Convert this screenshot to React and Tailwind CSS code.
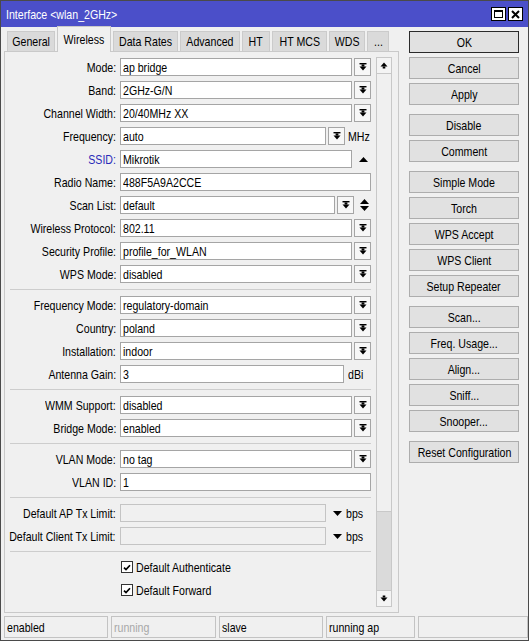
const TABS = [
  { label: "General", w: "w-[48px]" },
  { label: "Wireless", w: "w-[54px]", active: true },
  { label: "Data Rates", w: "w-[65px]" },
  { label: "Advanced", w: "w-[60px]" },
  { label: "HT", w: "w-[28px]" },
  { label: "HT MCS", w: "w-[55px]" },
  { label: "WDS", w: "w-[36px]" },
  { label: "...", w: "w-[22px]" },
];

const SECTIONS = [
  [
    { label: "Mode", value: "ap bridge", kind: "select" },
    { label: "Band", value: "2GHz-G/N", kind: "select" },
    { label: "Channel Width", value: "20/40MHz XX", kind: "select" },
    { label: "Frequency", value: "auto", kind: "freq" },
    { label: "SSID", value: "Mikrotik", kind: "ssid", blue: true },
    { label: "Radio Name", value: "488F5A9A2CCE", kind: "text" },
    { label: "Scan List", value: "default", kind: "scan" },
    { label: "Wireless Protocol", value: "802.11", kind: "select" },
    { label: "Security Profile", value: "profile_for_WLAN", kind: "select" },
    { label: "WPS Mode", value: "disabled", kind: "select" },
  ],
  [
    { label: "Frequency Mode", value: "regulatory-domain", kind: "select" },
    { label: "Country", value: "poland", kind: "select" },
    { label: "Installation", value: "indoor", kind: "select" },
    { label: "Antenna Gain", value: "3", kind: "dbi" },
  ],
  [
    { label: "WMM Support", value: "disabled", kind: "select" },
    { label: "Bridge Mode", value: "enabled", kind: "select" },
  ],
  [
    { label: "VLAN Mode", value: "no tag", kind: "select" },
    { label: "VLAN ID", value: "1", kind: "text" },
  ],
  [
    { label: "Default AP Tx Limit", value: "", kind: "bps" },
    { label: "Default Client Tx Limit", value: "", kind: "bps" },
  ],
];

const BUTTON_GROUPS = [
  ["OK", "Cancel", "Apply"],
  ["Disable", "Comment"],
  ["Simple Mode", "Torch", "WPS Accept", "WPS Client", "Setup Repeater"],
  ["Scan...", "Freq. Usage...", "Align...", "Sniff...", "Snooper..."],
  ["Reset Configuration"],
];

const STATUS = [
  { text: "enabled", w: "w-[104px]" },
  { text: "running", w: "w-[105px]", dim: true },
  { text: "slave", w: "w-[104px]" },
  { text: "running ap", w: "w-[89px]" },
  { text: "", w: "w-[110px]" },
];

// Winbox text is a narrow face; Liberation Sans squeezed to match its widths
const T = ({ children, origin = "origin-left" }) => (
  <span className={`inline-block shrink-0 whitespace-nowrap scale-x-[0.815] ${origin}`}>
    {children}
  </span>
);

const DropIcon = () => (
  <svg width="8" height="8" viewBox="0 0 8 8" fill="#000">
    <rect x="0.5" y="0" width="7" height="1.4" />
    <rect x="2.6" y="1.4" width="2.8" height="2.2" />
    <polygon points="0.5,3.6 7.5,3.6 4,7.6" />
  </svg>
);

const TriUp = () => (
  <svg width="9" height="5" viewBox="0 0 9 5" fill="#000">
    <polygon points="0,5 9,5 4.5,0" />
  </svg>
);

const TriDown = () => (
  <svg width="9" height="5" viewBox="0 0 9 5" fill="#000">
    <polygon points="0,0 9,0 4.5,5" />
  </svg>
);

const ArrowUp = () => (
  <svg width="8" height="7" viewBox="0 0 8 7" fill="#000">
    <polygon points="0.5,4.5 7.5,4.5 4,0.5" />
    <rect x="2.7" y="4.5" width="2.6" height="2" />
  </svg>
);

const ArrowDown = () => (
  <svg width="8" height="7" viewBox="0 0 8 7" fill="#000">
    <rect x="2.7" y="0.5" width="2.6" height="2" />
    <polygon points="0.5,2.5 7.5,2.5 4,6.5" />
  </svg>
);

const Field = ({ value, w, disabled }) => (
  <div
    className={`${w} shrink-0 h-[18px] flex items-center pl-[2px] border ${
      disabled ? "bg-[#f0f0f0] border-[#c4c4c4]" : "bg-white border-[#a5a5a5]"
    } overflow-hidden`}
  >
    {value && <T>{value}</T>}
  </div>
);

const DropButton = () => (
  <div className="w-[17px] h-[18px] shrink-0 ml-[2px] flex items-center justify-center border border-[#a5a5a5] bg-[#f7f7f7]">
    <DropIcon />
  </div>
);

const Unit = ({ text, className }) => (
  <span className={`w-[22px] shrink-0 flex ${className}`}>
    <T>{text}</T>
  </span>
);

const Row = ({ row }) => {
  let control;
  if (row.kind === "select") {
    control = (
      <>
        <Field value={row.value} w="w-[232px]" />
        <DropButton />
      </>
    );
  } else if (row.kind === "text") {
    control = <Field value={row.value} w="w-[251px]" />;
  } else if (row.kind === "freq") {
    control = (
      <>
        <Field value={row.value} w="w-[206px]" />
        <DropButton />
        <Unit text="MHz" className="ml-[3px]" />
      </>
    );
  } else if (row.kind === "ssid") {
    control = (
      <>
        <Field value={row.value} w="w-[232px]" />
        <span className="ml-[7px] flex">
          <TriUp />
        </span>
      </>
    );
  } else if (row.kind === "scan") {
    control = (
      <>
        <Field value={row.value} w="w-[215px]" />
        <DropButton />
        <span className="ml-[6px] flex flex-col gap-[2px]">
          <TriUp />
          <TriDown />
        </span>
      </>
    );
  } else if (row.kind === "dbi") {
    control = (
      <>
        <Field value={row.value} w="w-[224px]" />
        <Unit text="dBi" className="ml-[4px]" />
      </>
    );
  } else if (row.kind === "bps") {
    control = (
      <>
        <Field value="" w="w-[206px]" disabled />
        <span className="ml-[7px] flex">
          <TriDown />
        </span>
        <Unit text="bps" className="ml-[4px]" />
      </>
    );
  }

  return (
    <div className="h-[18px] flex items-center">
      <div
        className={`w-[111px] shrink-0 flex justify-end ${
          row.blue ? "text-[#2a2ab8]" : "text-black"
        }`}
      >
        <T origin="origin-right">{row.label}:</T>
      </div>
      <div className="ml-[4px] flex items-center">{control}</div>
    </div>
  );
};

const Separator = () => (
  <div className="h-[3px] flex items-center ml-[5px] w-[361px]">
    <div className="w-full h-px bg-[#cdcdcd]" />
  </div>
);

const Checkbox = ({ label }) => (
  <div className="h-[18px] flex items-center pl-[116px]">
    <div className="w-[12px] h-[12px] shrink-0 border border-[#333] bg-white flex items-center justify-center">
      <svg width="8" height="7" viewBox="0 0 8 7" fill="none">
        <path d="M1 3.6 L3 5.6 L7 1.2" stroke="#000" strokeWidth="1.7" />
      </svg>
    </div>
    <span className="ml-[3px] flex">
      <T>{label}</T>
    </span>
  </div>
);

const Scrollbar = () => (
  <div className="w-[16px] h-[550px] flex flex-col border border-[#c8c8c8] bg-[#dadada]">
    <div className="h-[16px] flex items-center justify-center bg-[#f4f4f4] border-b border-[#c8c8c8]">
      <ArrowUp />
    </div>
    <div className="h-[438px] bg-[#f0f0f0] border-b border-[#c8c8c8]" />
    <div className="flex-1" />
    <div className="h-[16px] flex items-center justify-center bg-[#f4f4f4] border-t border-[#c8c8c8]">
      <ArrowDown />
    </div>
  </div>
);

const App = () => {
  return (
    <div className="w-[529px] h-[641px] flex flex-col border border-[#4a4a4a] bg-[#f0f0f0] text-[13px] leading-none text-black font-['Liberation_Sans',Arial,sans-serif]">
      <div className="h-[26px] shrink-0 flex items-center bg-[#4b4fc9] pl-[5px] pr-[5px]">
        <span className="text-white flex">
          <T>Interface &lt;wlan_2GHz&gt;</T>
        </span>
        <div className="ml-auto flex gap-[2px]">
          <div className="w-[15px] h-[14px] bg-white border border-black flex items-center justify-center">
            <div className="w-[9px] h-[8px] border border-black border-t-2" />
          </div>
          <div className="w-[15px] h-[14px] bg-white border border-black flex items-center justify-center">
            <svg width="9" height="9" viewBox="0 0 9 9">
              <path d="M1 1 L8 8 M8 1 L1 8" stroke="#000" strokeWidth="2" />
            </svg>
          </div>
        </div>
      </div>

      <div className="h-[586px] shrink-0 flex">
        <div className="w-[398px] pl-[3px] flex flex-col">
          <div className="h-[24px] flex items-end gap-[2px] pl-[3px]">
            {TABS.map((tab) =>
              tab.active ? (
                <div
                  key={tab.label}
                  className={`${tab.w} h-[26px] -mb-px relative z-10 flex items-start justify-center pt-[6px] bg-[#f0f0f0] border border-b-0 border-[#c9c9c9]`}
                >
                  <T origin="origin-center">{tab.label}</T>
                </div>
              ) : (
                <div
                  key={tab.label}
                  className={`${tab.w} h-[20px] flex items-center justify-center bg-[#dadada] border border-b-0 border-[#cbcbcb]`}
                >
                  <T origin="origin-center">{tab.label}</T>
                </div>
              )
            )}
          </div>
          <div className="h-[562px] flex border border-[#c9c9c9] bg-[#f0f0f0]">
            <div className="w-[366px] shrink-0 flex flex-col gap-[5px] pt-[6px]">
              {SECTIONS.map((section, i) => (
                <div key={i} className="flex flex-col gap-[5px]">
                  {section.map((row) => (
                    <Row key={row.label} row={row} />
                  ))}
                  <Separator />
                </div>
              ))}
              <Checkbox label="Default Authenticate" />
              <Checkbox label="Default Forward" />
            </div>
            <div className="ml-[5px] pt-[5px]">
              <Scrollbar />
            </div>
          </div>
        </div>

        <div className="ml-[10px] w-[110px] pt-[4px] flex flex-col gap-[9px]">
          {BUTTON_GROUPS.map((group, i) => (
            <div key={i} className="flex flex-col gap-[4px]">
              {group.map((label) => (
                <div
                  key={label}
                  className={`h-[22px] flex items-center justify-center bg-[#e1e1e1] border ${
                    label === "OK" ? "border-[#2b2b2b]" : "border-[#adadad]"
                  }`}
                >
                  <T origin="origin-center">{label}</T>
                </div>
              ))}
            </div>
          ))}
        </div>
      </div>

      <div className="mt-[3px] h-[22px] shrink-0 flex gap-[3px] pl-[3px]">
        {STATUS.map((s, i) => (
          <div
            key={i}
            className={`${s.w} h-[22px] flex items-center pl-[2px] border border-[#c3c3c3] ${
              s.dim ? "text-[#a8a8a8]" : "text-black"
            }`}
          >
            {s.text && <T>{s.text}</T>}
          </div>
        ))}
      </div>
    </div>
  );
};

export default App;
